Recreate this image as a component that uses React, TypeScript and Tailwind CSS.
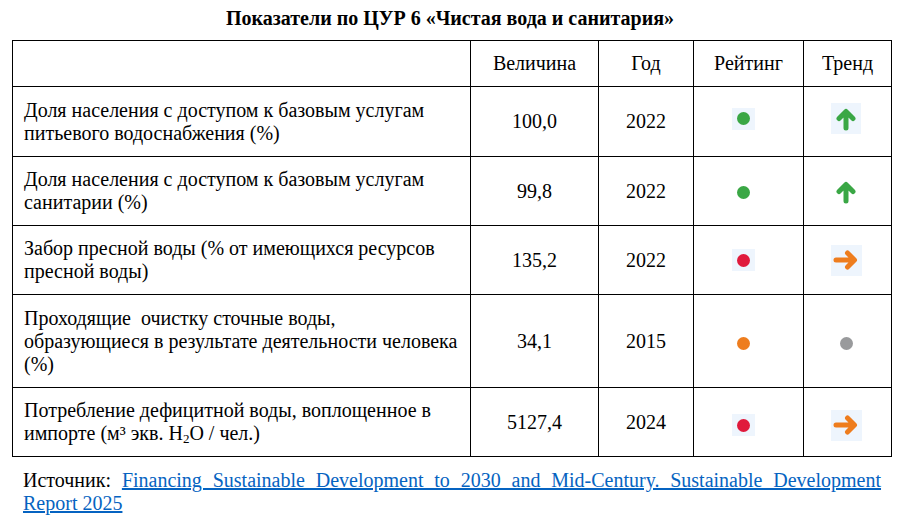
import React from "react";

const Dot = ({ color, bg }: { color: string; bg?: boolean }) => (
  <span className={`inline-flex items-center justify-center w-[23px] h-[22px] ${bg ? "bg-[#eef5fd]" : ""}`}>
    <span className="block w-[13px] h-[13px] rounded-full" style={{ backgroundColor: color }} />
  </span>
);

const UpArrow = ({ bg }: { bg?: boolean }) => (
  <span className={`inline-flex items-center justify-center w-[30px] h-[31px] ${bg ? "bg-[#eef5fd]" : ""}`}>
    <svg width="20" height="24" viewBox="0 0 20 24">
      <path d="M10 21 V5 M3 11.5 L10 4.5 L17 11.5" stroke="#3aa745" strokeWidth="5" strokeLinecap="round" strokeLinejoin="round" fill="none" />
    </svg>
  </span>
);

const RightArrow = ({ bg }: { bg?: boolean }) => (
  <span className={`inline-flex items-center justify-center w-[31px] h-[31px] ${bg ? "bg-[#eef5fd]" : ""}`}>
    <svg width="26" height="20" viewBox="0 0 26 20">
      <path d="M3 10 H21 M14.5 3 L21.5 10 L14.5 17" stroke="#ee7d1e" strokeWidth="5" strokeLinecap="round" strokeLinejoin="round" fill="none" />
    </svg>
  </span>
);

const td = "border border-black align-middle";

export default function App() {
  const rows = [
    {
      name: <>Доля населения с доступом к базовым услугам<br />питьевого водоснабжения (%)</>,
      value: "100,0",
      year: "2022",
      h: "h-[70px]",
      shift: "-mt-[6px]",
      rating: <Dot color="#3aa745" bg />,
      trend: <UpArrow bg />,
    },
    {
      name: <>Доля населения с доступом к базовым услугам<br />санитарии (%)</>,
      value: "99,8",
      year: "2022",
      h: "h-[69px]",
      shift: "mt-[2px]",
      rating: <Dot color="#3aa745" />,
      trend: <UpArrow />,
    },
    {
      name: <>Забор пресной воды (% от имеющихся ресурсов<br />пресной воды)</>,
      value: "135,2",
      year: "2022",
      h: "h-[69px]",
      shift: "mt-0",
      rating: <Dot color="#e01a3c" bg />,
      trend: <RightArrow bg />,
    },
    {
      name: <>Проходящие&nbsp; очистку сточные воды,<br /><span className="whitespace-nowrap">образующиеся в результате деятельности человека</span><br />(%)</>,
      value: "34,1",
      year: "2015",
      h: "h-[93px]",
      shift: "mt-[5px]",
      rating: <Dot color="#ee7d1e" />,
      trend: <Dot color="#999a9c" />,
    },
    {
      name: <>Потребление дефицитной воды, воплощенное в<br />импорте (м³ экв. H<sub className="text-[13px] align-baseline relative top-[3px]">2</sub>O / чел.)</>,
      value: "5127,4",
      year: "2024",
      h: "h-[69px]",
      shift: "mt-[6px]",
      rating: <Dot color="#e01a3c" bg />,
      trend: <RightArrow bg />,
    },
  ];

  return (
    <div className="w-[900px] h-[519px] bg-white text-black font-['Liberation_Serif'] overflow-hidden">
      <div className="h-[40px] pt-[6px] text-center font-bold text-[20px] leading-[24px]">
        Показатели по ЦУР 6 «Чистая вода и санитария»
      </div>
      <table className="ml-[12px] w-[879px] border-collapse border border-black text-[20px] leading-[23px] table-fixed">
        <colgroup>
          <col className="w-[458px]" />
          <col className="w-[128px]" />
          <col className="w-[95px]" />
          <col className="w-[110px]" />
          <col className="w-[88px]" />
        </colgroup>
        <tbody>
          <tr className="h-[46px]">
            <td className={td}></td>
            <td className={`${td} text-center`}>Величина</td>
            <td className={`${td} text-center`}>Год</td>
            <td className={`${td} text-center`}>Рейтинг</td>
            <td className={`${td} text-center`}>Тренд</td>
          </tr>
          {rows.map((r, i) => (
            <tr key={i} className={r.h}>
              <td className={`${td} pl-[11px] pr-[2px] text-left`}>{r.name}</td>
              <td className={`${td} text-center`}>{r.value}</td>
              <td className={`${td} text-center`}>{r.year}</td>
              <td className={`${td} text-center`}>
                <div className={`flex justify-center pr-[10px] ${r.shift}`}>{r.rating}</div>
              </td>
              <td className={`${td} text-center`}>
                <div className={`flex justify-center pr-[3px] ${r.shift}`}>{r.trend}</div>
              </td>
            </tr>
          ))}
        </tbody>
      </table>
      <div className="mx-[23px] mt-[12px] text-[20px] leading-[23px] w-[858px]">
        <p className="text-justify [text-align-last:justify] whitespace-nowrap">
          Источник:{" "}
          <a className="text-[#0563c1] underline decoration-[#0563c1]" href="#">
            Financing Sustainable Development to 2030 and Mid-Century. Sustainable Development
          </a>
        </p>
        <p>
          <a className="text-[#0563c1] underline decoration-[#0563c1]" href="#">
            Report 2025
          </a>
        </p>
      </div>
    </div>
  );
}
